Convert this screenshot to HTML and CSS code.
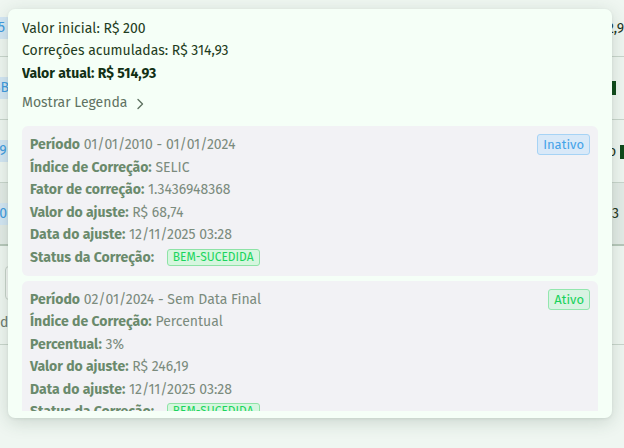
FILE: index.html
```html
<!DOCTYPE html>
<html lang="pt-BR">
<head>
<meta charset="utf-8">
<title>Correções</title>
<link rel="stylesheet" href="styles.css">
</head>
<body>
<div class="page">
  <div class="row">
    <span class="chip">75</span>
    <span class="r-text r-first">2,90</span>
  </div>
  <div class="row">
    <span class="chip">BB</span>
    <span class="r-btn"></span>
  </div>
  <div class="row">
    <span class="chip">49</span>
    <span class="r-text r-third">o <i class="r-btn2"></i></span>
  </div>
  <div class="row row-hl">
    <span class="chip">90</span>
    <span class="r-text r-fourth">3</span>
  </div>
  <div class="row row-foot">
    <div class="foot-left">
      <span class="input-box"></span>
      <span class="foot-text">de</span>
    </div>
  </div>
</div>

<div class="modal">
  <div class="modal-body">
    <div class="summary">
      <div class="line">Valor inicial: R$ 200</div>
      <div class="line">Correções acumuladas: R$ 314,93</div>
      <div class="line strong">Valor atual: R$ 514,93</div>
    </div>
    <div class="legend-toggle">Mostrar Legenda
      <svg class="chev" width="10" height="12" viewBox="0 0 10 12"><path d="M3 1.5 L7.5 6 L3 10.5" fill="none" stroke="currentColor" stroke-width="1.4" stroke-linecap="round" stroke-linejoin="round"/></svg>
    </div>

    <div class="card">
      <div class="card-head">
        <div class="field"><b>Período</b> 01/01/2010 - 01/01/2024</div>
        <span class="badge badge-blue">Inativo</span>
      </div>
      <div class="field"><b>Índice de Correção:</b> SELIC</div>
      <div class="field"><b>Fator de correção:</b> 1.3436948368</div>
      <div class="field"><b>Valor do ajuste:</b> R$ 68,74</div>
      <div class="field"><b>Data do ajuste:</b> 12/11/2025 03:28</div>
      <div class="field status"><b>Status da Correção:</b> <span class="status-badge">BEM-SUCEDIDA</span></div>
    </div>

    <div class="card">
      <div class="card-head">
        <div class="field"><b>Período</b> 02/01/2024 - Sem Data Final</div>
        <span class="badge badge-green">Ativo</span>
      </div>
      <div class="field"><b>Índice de Correção:</b> Percentual</div>
      <div class="field"><b>Percentual:</b> 3%</div>
      <div class="field"><b>Valor do ajuste:</b> R$ 246,19</div>
      <div class="field"><b>Data do ajuste:</b> 12/11/2025 03:28</div>
      <div class="field status"><b>Status da Correção:</b> <span class="status-badge">BEM-SUCEDIDA</span></div>
    </div>
  </div>
</div>
</body>
</html>
```

FILE: styles.css
```css
* { box-sizing: border-box; }
html, body {
  margin: 0;
  padding: 0;
  width: 624px;
  height: 448px;
  overflow: hidden;
  background: #eff6f1;
  font-family: "Fira Sans", "Noto Sans", "Open Sans", sans-serif;
}

/* background page */
.page {
  display: flex;
  flex-direction: column;
}
.row {
  height: 63px;
  border-bottom: 1px solid #c9d5cc;
  display: flex;
  align-items: center;
  justify-content: space-between;
  overflow: hidden;
}
.row:first-child { height: 57px; }
.row-hl { background: #e3ebe6; border-bottom: 2px solid #b7c7ba; }
.chip {
  margin-left: -12px;
  background: #d3e6f4;
  color: #3f9be0;
  font-size: 14px;
  line-height: 22px;
  padding: 0 4px;
}
.r-text {
  font-size: 14px;
  color: #1f3420;
}
.r-first { margin-right: -8px; }
.r-third { margin-right: -2px; }
.r-fourth { margin-right: 5px; }
.r-btn {
  width: 5px;
  height: 14px;
  background: #0f4a1a;
  margin-right: 8px;
}
.r-btn2 {
  display: inline-block;
  width: 6px;
  height: 14px;
  background: #0f4a1a;
  vertical-align: middle;
}
.row-foot { height: 99px; align-items: flex-start; }
.foot-left { display: flex; flex-direction: column; padding-top: 20px; }
.input-box {
  margin-left: 5px;
  width: 40px;
  height: 34px;
  border: 1px solid #c8d2ca;
  border-radius: 4px;
  background: #f4f8f5;
}
.foot-text { font-size: 14px; color: #6c7a6e; margin-top: 14px; }

/* modal overlay */
.modal {
  position: absolute;
  left: 8px;
  top: 9px;
  width: 604px;
  height: 409px;
  background: #f5fff7;
  border-radius: 7px;
  box-shadow: 0 4px 18px rgba(40, 70, 50, 0.18), 0 1px 3px rgba(40, 70, 50, 0.08);
  padding: 9px 14px 7px 14px;
}
.modal-body {
  height: 100%;
  overflow: hidden;
  display: flex;
  flex-direction: column;
}
.summary { color: #1e3c21; font-size: 14px; }
.line { line-height: 22px; }
.line.strong { font-weight: 700; color: #123015; line-height: 23px; }
.legend-toggle {
  margin-top: 7px;
  line-height: 22px;
  font-size: 14px;
  color: #5f7262;
  display: flex;
  align-items: center;
  gap: 8px;
}
.chev { margin-top: 1px; }

.card {
  flex-shrink: 0;
  background: #f2f2f5;
  border-radius: 6px;
  padding: 8px 8px 7px 8px;
  margin-top: 12px;
  font-size: 14px;
  color: #7b8b7d;
}
.card + .card { margin-top: 5px; }
.card-head {
  display: flex;
  justify-content: space-between;
  align-items: flex-start;
}
.field { line-height: 22.5px; }
.field b { color: #6a8a6c; font-weight: 700; }
.field.status { line-height: 22px; }
.badge {
  font-size: 13px;
  line-height: 19px;
  padding: 0 5px;
  border-radius: 3px;
}
.badge-blue { background: #d9e9f8; border: 1px solid #a6d3f5; color: #45a3e9; }
.badge-green { background: #d9f3e3; border: 1px solid #93e6ae; color: #17d25a; }
.status-badge {
  display: inline-block;
  margin-left: 9px;
  font-size: 12px;
  line-height: 15px;
  padding: 0 5px;
  border-radius: 3px;
  background: #d6f6df;
  border: 1px solid #8ee3a6;
  color: #1bd55d;
  vertical-align: 1px;
}
```
